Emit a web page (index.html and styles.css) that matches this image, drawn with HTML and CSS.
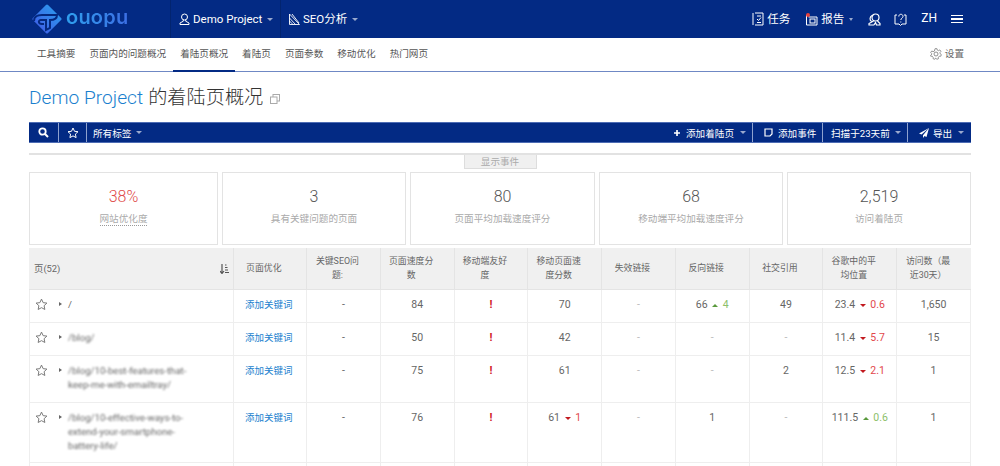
FILE: index.html
```html
<!DOCTYPE html>
<html lang="zh">
<head>
<meta charset="utf-8">
<title>Demo Project 的着陆页概况</title>
<link rel="stylesheet" href="styles.css">
</head>
<body>
<div class="page">
  <header class="topbar">
    <a class="logo">
      <svg width="30" height="30" viewBox="0 0 30 30"><defs><linearGradient id="lg" x1="1" y1="0" x2="0" y2="1"><stop offset="0" stop-color="#2aa0ee"/><stop offset="1" stop-color="#4257e6"/></linearGradient></defs><path d="M15 2 L28 15 L15 28 L2 15 Z" fill="url(#lg)" stroke="url(#lg)" stroke-width="3" stroke-linejoin="round"/><path d="M2 17 C2 11 7 11 10 11 H25 C25 15 21 16 18 16 V24 L14 26 V16 H9 C6 16 6 20 10 20 H12" fill="none" stroke="#04287f" stroke-width="2"/></svg>
      <span class="wordmark">ouopu</span>
    </a>
    <div class="top-item first">
      <svg class="ic" width="11" height="12" viewBox="0 0 11 12"><circle cx="5.500" cy="4" r="3" fill="none" stroke="#fff"/><path d="M4.300 7v1.200L1 10v1.500h9V10L6.700 8.200V7" fill="none" stroke="#fff"/></svg>
      <span class="top-text">Demo Project</span><i class="caret"></i>
    </div>
    <div class="top-item second">
      <svg class="ic" width="12" height="12" viewBox="0 0 12 12"><path d="M1.500 1v10.500H11.500L1.500 1M1.500 5l6 6.500M1.500 8l3.500 3.500M4 1l7 9" fill="none" stroke="#fff" stroke-width=".9"/></svg>
      <span class="top-text">SEO分析</span><i class="caret"></i>
    </div>
    <div class="top-right">
      <div class="r-item tasks">
        <svg width="12" height="14" viewBox="0 0 12 14"><path d="M3 1H11V13H3M1 1V13M5 4h4M5 7l1.500 1.500L9 5.500M5 10.500h4" fill="none" stroke="#fff"/></svg>
        <span class="top-text">任务</span>
      </div>
      <div class="r-item reports">
        <svg width="13" height="14" viewBox="0 0 13 14"><path d="M1.500 3V13H12V5H3.500" fill="none" stroke="#fff"/><rect x="5" y="7" width="5" height="4" fill="none" stroke="#fff"/><circle cx="3" cy="3" r="2" fill="#e8413c"/></svg>
        <span class="top-text">报告</span><i class="caret small"></i>
      </div>
      <svg class="r-icon people" width="13" height="13" viewBox="0 0 13 13"><circle cx="7.500" cy="4.500" r="3.500" fill="none" stroke="#fff" stroke-width="1.200"/><path d="M5.500 8 1 10.500V12h5M9.500 8 12 10.500V12H8M4 2.500C1.500 4 1.500 7 3.500 8.500M6 12l1.500-2.500 1 2.500" fill="none" stroke="#fff" stroke-width="1.200"/></svg>
      <svg class="r-icon book" width="13" height="13" viewBox="0 0 13 13"><path d="M3 2H1v9h4l1.500 1.500L8 11h4V2h-2" fill="none" stroke="#fff"/><path d="M4.800 3.500C4.800 .5 9 .5 9 3.500 9 5 7 5 6.800 7M6.800 8.500v1" fill="none" stroke="#fff"/></svg>
      <span class="lang">ZH</span>
      <div class="burger"><i></i><i></i><i></i></div>
    </div>
  </header>

  <nav class="subnav">
    <a class="tab">工具摘要</a>
    <a class="tab">页面内的问题概况</a>
    <a class="tab active">着陆页概况</a>
    <a class="tab">着陆页</a>
    <a class="tab">页面参数</a>
    <a class="tab">移动优化</a>
    <a class="tab">热门网页</a>
    <a class="settings">
      <svg width="12" height="12" viewBox="0 0 12 12"><circle cx="6" cy="6" r="2" fill="none" stroke="#777" stroke-width=".8"/><path d="M5 .6h2l.3 1.500 1.400.6 1.300-.8 1.200 1.500-1 1.100.2 1.500 1.200.8-.6 1.800-1.500-.1-1 1.100.1 1.500-1.800.7-.8-1.200H5.500l-.8 1.200-1.800-.7.1-1.500-1-1.100-1.500.1L0 7.900l1.200-.8.2-1.500-1-1.100 1.200-1.500 1.300.8 1.400-.6z" transform="translate(.3 .1) scale(.95)" fill="none" stroke="#777" stroke-width=".8"/></svg>
      设置
    </a>
  </nav>

  <main class="content">
    <h1 class="title"><span class="title-link">Demo Project</span> 的着陆页概况
      <svg class="copy" width="10" height="10" viewBox="0 0 10 10"><rect x="3" y=".5" width="6.500" height="6.500" fill="none" stroke="#aaa"/><rect x=".5" y="3" width="6.500" height="6.500" fill="#fff" stroke="#aaa"/></svg>
    </h1>

    <div class="toolbar">
      <div class="tb-cell search">
        <svg width="11" height="11" viewBox="0 0 11 11"><circle cx="4.500" cy="4.500" r="3.200" fill="none" stroke="#fff" stroke-width="1.800"/><path d="M7 7l3 3" stroke="#fff" stroke-width="2"/></svg>
      </div>
      <div class="tb-cell star">
        <svg width="12" height="12" viewBox="0 0 12 12"><path d="M6 1l1.500 3.300 3.500.4-2.600 2.400.7 3.500L6 8.900l-3.100 1.700.7-3.500L1 4.700l3.500-.4z" fill="none" stroke="#fff"/></svg>
      </div>
      <div class="tb-cell tags">所有标签<i class="caret"></i></div>
      <div class="tb-cell add">
        <svg width="8" height="8" viewBox="0 0 8 8"><path d="M4 0v8M0 4h8" stroke="#fff" stroke-width="2.200"/></svg>
        添加着陆页<i class="caret"></i>
      </div>
      <div class="tb-cell event">
        <svg width="9" height="9" viewBox="0 0 9 9"><path d="M1 1h7v5L6 8H1z" fill="none" stroke="#fff" stroke-width="1.200"/></svg>
        添加事件
      </div>
      <div class="tb-cell scan">扫描于23天前<i class="caret"></i></div>
      <div class="tb-cell export">
        <svg width="10" height="10" viewBox="0 0 10 10"><path d="M10 0 0 5.500l2.500 1L10 0 4 7.200V10l1.500-2 2 1z" fill="#fff"/></svg>
        导出<i class="caret"></i>
      </div>
    </div>

    <div class="events-line"><button class="events-btn">显示事件</button></div>

    <section class="cards">
      <div class="card c1"><div class="num red">38%</div><div class="label under">网站优化度</div></div>
      <div class="card c2"><div class="num">3</div><div class="label">具有关键问题的页面</div></div>
      <div class="card c3"><div class="num">80</div><div class="label">页面平均加载速度评分</div></div>
      <div class="card c4"><div class="num">68</div><div class="label">移动端平均加载速度评分</div></div>
      <div class="card c5"><div class="num">2,519</div><div class="label">访问着陆页</div></div>
    </section>

    <table class="grid">
      <colgroup>
        <col class="col-page"><col class="col-opt"><col class="col-n"><col class="col-n"><col class="col-n"><col class="col-n"><col class="col-n"><col class="col-n"><col class="col-n"><col class="col-n"><col class="col-n">
      </colgroup>
      <thead>
        <tr>
          <th class="th-page"><span>页(52)</span>
            <svg width="9" height="10" viewBox="0 0 9 10"><path d="M2 0v9M0 7l2 2.500L4 7M5 1h1.500M5 3.500h2.500M5 6h3M5 8.500h4" fill="none" stroke="#555" stroke-width="1.200"/></svg>
          </th>
          <th class="th-opt">页面优化</th>
          <th>关键SEO问题:</th>
          <th>页面速度分数</th>
          <th>移动端友好度</th>
          <th>移动页面速度分数</th>
          <th>失效链接</th>
          <th>反向链接</th>
          <th>社交引用</th>
          <th>谷歌中的平均位置</th>
          <th>访问数（最近30天）</th>
        </tr>
      </thead>
      <tbody>
        <tr>
          <td class="td-page"><div class="page-cell"><svg class="fav" width="13" height="13" viewBox="0 0 12 12"><path d="M6 1l1.500 3.300 3.500.4-2.600 2.400.7 3.500L6 8.900l-3.100 1.700.7-3.500L1 4.700l3.500-.4z" fill="none" stroke="#777" stroke-width=".9"/></svg><i class="arrow"></i><span class="url">/</span></div></td>
          <td class="td-opt"><a class="kw">添加关键词</a></td>
          <td>-</td><td>84</td><td class="bang">!</td><td>70</td><td class="nil">-</td>
          <td>66 <i class="up"></i> <span class="green">4</span></td><td>49</td>
          <td>23.4 <i class="down"></i> <span class="redv">0.6</span></td><td>1,650</td>
        </tr>
        <tr>
          <td class="td-page"><div class="page-cell"><svg class="fav" width="13" height="13" viewBox="0 0 12 12"><path d="M6 1l1.500 3.300 3.500.4-2.600 2.400.7 3.500L6 8.900l-3.100 1.700.7-3.500L1 4.700l3.500-.4z" fill="none" stroke="#777" stroke-width=".9"/></svg><i class="arrow"></i><span class="url blur">/blog/</span></div></td>
          <td class="td-opt"><a class="kw">添加关键词</a></td>
          <td>-</td><td>50</td><td class="bang">!</td><td>42</td><td class="nil">-</td><td class="nil">-</td><td class="nil">-</td>
          <td>11.4 <i class="down"></i> <span class="redv">5.7</span></td><td>15</td>
        </tr>
        <tr>
          <td class="td-page"><div class="page-cell"><svg class="fav" width="13" height="13" viewBox="0 0 12 12"><path d="M6 1l1.500 3.300 3.500.4-2.600 2.400.7 3.500L6 8.900l-3.100 1.700.7-3.500L1 4.700l3.500-.4z" fill="none" stroke="#777" stroke-width=".9"/></svg><i class="arrow"></i><span class="url blur">/blog/10-best-features-that-<br>keep-me-with-emailtray/</span></div></td>
          <td class="td-opt"><a class="kw">添加关键词</a></td>
          <td>-</td><td>75</td><td class="bang">!</td><td>61</td><td class="nil">-</td><td class="nil">-</td><td>2</td>
          <td>12.5 <i class="down"></i> <span class="redv">2.1</span></td><td>1</td>
        </tr>
        <tr class="tall">
          <td class="td-page"><div class="page-cell"><svg class="fav" width="13" height="13" viewBox="0 0 12 12"><path d="M6 1l1.500 3.300 3.500.4-2.600 2.400.7 3.500L6 8.900l-3.100 1.700.7-3.500L1 4.700l3.500-.4z" fill="none" stroke="#777" stroke-width=".9"/></svg><i class="arrow"></i><span class="url blur">/blog/10-effective-ways-to-<br>extend-your-smartphone-<br>battery-life/</span></div></td>
          <td class="td-opt"><a class="kw">添加关键词</a></td>
          <td>-</td><td>76</td><td class="bang">!</td><td>61 <i class="down"></i> <span class="redv">1</span></td><td class="nil">-</td><td>1</td><td class="nil">-</td>
          <td>111.5 <i class="up"></i> <span class="green">0.6</span></td><td>1</td>
        </tr>
        <tr class="spacer">
          <td></td><td></td><td></td><td></td><td></td><td></td><td></td><td></td><td></td><td></td><td></td>
        </tr>
      </tbody>
    </table>
  </main>
</div>
</body>
</html>
```

FILE: styles.css
```css
* { box-sizing: border-box; }
html, body { margin: 0; padding: 0; background: #fff; }
body { font-family: Roboto, "Noto Sans CJK SC", sans-serif; color: #555; }
.page { width: 1000px; height: 466px; overflow: hidden; }

.topbar { height: 38px; background: #032a84; color: #fff; display: flex; align-items: center; }
.logo { width: 171px; padding-left: 32px; display: flex; align-items: center; gap: 4px; height: 38px; border-right: 1px solid #02246f; }
.wordmark { font-family: Inter, sans-serif; font-size: 20px; font-weight: 600; letter-spacing: .2px; line-height: 1; margin-top: -5px; background: linear-gradient(90deg, #2f9fee, #3c6fe4); -webkit-background-clip: text; background-clip: text; color: transparent; }
.top-item { display: flex; align-items: center; height: 38px; }
.top-item.first { width: 110px; padding-left: 8px; border-right: 1px solid #02246f; }
.top-item.second { padding-left: 7px; }
.top-text { font-size: 11.500px; line-height: 14px; margin-left: 3px; white-space: nowrap; }
.caret { display: inline-block; width: 0; height: 0; margin-left: 5px; border-left: 3px solid transparent; border-right: 3px solid transparent; border-top: 3px solid rgba(255,255,255,.6); vertical-align: middle; }
.caret.small { border-left-width: 2.500px; border-right-width: 2.500px; }
.top-right { margin-left: auto; display: flex; align-items: center; padding-right: 37px; height: 38px; }
.r-item { display: flex; align-items: center; }
.reports { margin-left: 15px; }
.r-icon { margin-left: 15px; }
.book { margin-left: 13px; }
.lang { font-size: 12px; margin-left: 14px; line-height: 14px; margin-top: -2px; }
.burger { margin-left: 14px; width: 12px; display: flex; flex-direction: column; gap: 2px; }
.burger i { display: block; height: 1.500px; background: #fff; }

.subnav { height: 34px; display: flex; align-items: stretch; padding-left: 30px; padding-right: 36px; border-bottom: 1px solid #6f88c4; }
.tab { padding: 0 7px; font-size: 9.600px; line-height: 31px; color: #555; white-space: nowrap; }
.tab.active { border-bottom: 2px solid #032a84; height: 34px; }
.settings { margin-left: auto; font-size: 9.600px; line-height: 31px; color: #666; display: flex; align-items: center; gap: 3px; height: 31px; }

.content { padding: 0 29px; }
.title { margin: 14px 0 0; height: 24px; font-size: 19.200px; line-height: 24px; font-weight: 300; color: #333; display: flex; align-items: center; gap: 5px; }
.title-link { color: #1a7fce; }
.copy { margin-left: 2px; margin-top: 2px; }

.toolbar { margin-top: 12px; height: 21px; background: #032a84; border-bottom: 1px solid #4d6cb4; border-top: 1px solid #4d6cb4; color: #fff; font-size: 9.600px; display: flex; align-items: center; }
.tb-cell { height: 19px; display: flex; align-items: center; white-space: nowrap; }
.search { width: 30px; justify-content: center; border-right: 1px solid #8fa2cf; }
.star { width: 28px; justify-content: center; border-right: 1px solid #8fa2cf; }
.tags { padding-left: 6px; }
.add { margin-left: auto; gap: 6px; padding-left: 1px; padding-right: 6px; border-right: 1px solid #8fa2cf; width: 80px; }
.tags .caret, .scan .caret { margin-left: 5px; }
.add .caret { margin-left: 0; }
.event { width: 70px; padding-left: 11px; gap: 5px; border-right: 1px solid #8fa2cf; }
.scan { width: 85px; padding-left: 8px; border-right: 1px solid #8fa2cf; }
.export { width: 63px; padding-left: 11px; gap: 4px; }
.export .caret { margin-left: 2px; }

.events-line { margin-top: 10px; height: 19px; border-top: 2px solid #e2e2e2; display: flex; justify-content: center; }
.events-btn { margin: 0; padding: 0; width: 73px; height: 14px; font: 9.600px/12px Roboto, "Noto Sans CJK SC", sans-serif; color: #aaa; background: #f0f0f0; border: 1px solid #ddd; border-top: none; }

.cards { display: flex; gap: 4px; height: 73px; }
.card { border: 1.500px solid #e3e3e3; text-align: center; padding-top: 14px; }
.c1 { width: 189px; }
.c2 { width: 184px; }
.c3 { width: 185px; }
.c4 { width: 184px; }
.c5 { width: 184px; }
.num { font-size: 16px; line-height: 20px; font-weight: 300; color: #555; }
.num.red { color: #e04a4a; }
.label { margin-top: 5px; font-size: 9.600px; line-height: 14px; color: #aaa; }
.label.under { display: inline-block; border-bottom: 1px dotted #999; line-height: 12px; }

.grid { margin-top: 3px; width: 942px; border-collapse: separate; border-spacing: 0; table-layout: fixed; font-size: 10.500px; }
.col-page { width: 205px; }
.col-opt { width: 73px; }
.col-n { width: 73.780px; }
.grid th { height: 42px; padding: 0 17px 0 5px; background: #f0f0f0; border-right: 1px solid #e4e4e4; border-bottom: 1px solid #e4e4e4; font-size: 8.900px; line-height: 13.500px; font-weight: 400; color: #666; text-align: center; vertical-align: middle; }
.grid th:last-child { border-right: none; }
.grid .th-page { padding: 0 4px 0 5px; text-align: left; font-size: 9.400px; }
.th-page svg { float: right; margin-top: 2px; }
.grid .th-opt { text-align: left; padding-left: 12px; }
.grid td { padding: 8px 2px 10px; border-right: 1px solid #eeeeee; border-bottom: 1px solid #eeeeee; line-height: 14px; text-align: center; vertical-align: top; color: #666; white-space: nowrap; }
.grid td:first-child { border-left: 1px solid #eee; }
.grid .td-page { padding-left: 5px; text-align: left; }
.grid .td-opt { padding-left: 11px; text-align: left; }
.grid .tall td { padding-bottom: 9px; }
.page-cell { display: flex; align-items: flex-start; }
.fav { flex: none; margin-right: 8px; }
.arrow { flex: none; width: 0; height: 0; margin: 4px 6px 0 3px; border-top: 2.500px solid transparent; border-bottom: 2.500px solid transparent; border-left: 3px solid #666; }
.url { color: #666; font-size: 9.600px; }
.blur { filter: blur(.9px); }
.kw { color: #1a7fce; font-size: 9.500px; }
.grid .bang { color: #d0191f; font-weight: 700; font-size: 11px; }
.grid .nil { color: #bbb; }
.up, .down { display: inline-block; width: 0; height: 0; margin: 0 2px; border-left: 3px solid transparent; border-right: 3px solid transparent; vertical-align: middle; }
.up { border-bottom: 3px solid #5a9a3c; }
.down { border-top: 3px solid #c2191f; }
.green { color: #8cc06a; }
.redv { color: #e2474c; }
.grid .spacer td { height: 33px; padding: 0; }
```
